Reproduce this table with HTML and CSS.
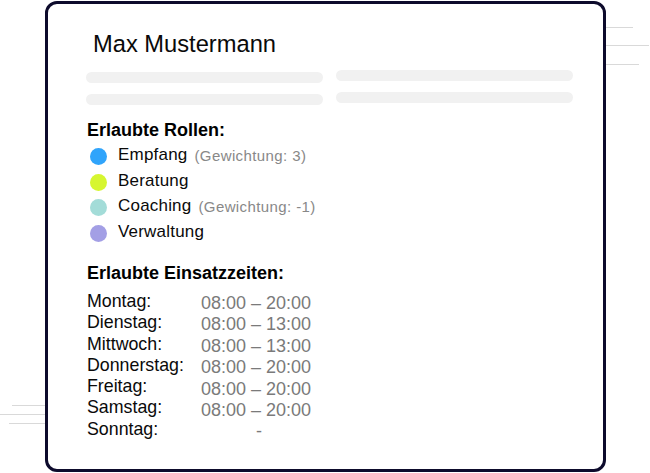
FILE: index.html
```html
<!DOCTYPE html>
<html lang="de">
<head>
<meta charset="utf-8">
<title>Max Mustermann</title>
<link rel="stylesheet" href="styles.css">
</head>
<body>
<div class="stage">
  <span class="deco deco-r1"></span>
  <span class="deco deco-r2"></span>
  <span class="deco deco-r3"></span>
  <span class="deco deco-l1"></span>
  <span class="deco deco-l2"></span>
  <span class="deco deco-l3"></span>

  <div class="card">
    <h1 class="name">Max Mustermann</h1>

    <div class="skeleton">
      <div class="sk-col">
        <span class="bar"></span>
        <span class="bar"></span>
      </div>
      <div class="sk-col sk-col-up">
        <span class="bar"></span>
        <span class="bar"></span>
      </div>
    </div>

    <h2 class="section-title section-roles">Erlaubte Rollen:</h2>
    <ul class="roles">
      <li class="role"><span class="dot dot-blue"></span><span class="role-name">Empfang</span><span class="weight">(Gewichtung: 3)</span></li>
      <li class="role"><span class="dot dot-lime"></span><span class="role-name">Beratung</span></li>
      <li class="role"><span class="dot dot-teal"></span><span class="role-name">Coaching</span><span class="weight">(Gewichtung: -1)</span></li>
      <li class="role"><span class="dot dot-purple"></span><span class="role-name">Verwaltung</span></li>
    </ul>

    <h2 class="section-title section-hours">Erlaubte Einsatzzeiten:</h2>
    <div class="hours">
      <div class="days">
        <div>Montag:</div>
        <div>Dienstag:</div>
        <div>Mittwoch:</div>
        <div>Donnerstag:</div>
        <div>Freitag:</div>
        <div>Samstag:</div>
        <div>Sonntag:</div>
      </div>
      <div class="times">
        <div>08:00 – 20:00</div>
        <div>08:00 – 13:00</div>
        <div>08:00 – 13:00</div>
        <div>08:00 – 20:00</div>
        <div>08:00 – 20:00</div>
        <div>08:00 – 20:00</div>
        <div class="none">-</div>
      </div>
    </div>
  </div>
</div>
</body>
</html>
```

FILE: styles.css
```css
* { box-sizing: border-box; }

html, body {
  margin: 0;
  padding: 0;
  background: #ffffff;
  width: 650px;
  height: 473px;
  overflow: hidden;
}

body {
  font-family: "Liberation Sans", Arial, Helvetica, sans-serif;
  color: #000000;
}

.stage {
  position: relative;
  width: 650px;
  height: 473px;
  padding-top: 1px;
  padding-left: 45px;
}

.deco {
  position: absolute;
  height: 1px;
  background: #d9d9d9;
  z-index: 0;
}
.deco-r1 { top: 27px; left: 590px; width: 43px; }
.deco-r2 { top: 45px; left: 590px; width: 59px; }
.deco-r3 { top: 64px; left: 590px; width: 49px; }
.deco-l1 { top: 405px; left: 12px; width: 40px; }
.deco-l2 { top: 414px; left: 0; width: 52px; }
.deco-l3 { top: 423px; left: 9px; width: 43px; }

.card {
  position: relative;
  z-index: 1;
  width: 561px;
  height: 471px;
  border: 3px solid #0d0b2c;
  border-radius: 12px;
  background: #ffffff;
  padding: 27px 30px 0 38px;
}

.name {
  margin: 0;
  padding-left: 7px;
  font-size: 23.7px;
  line-height: 27px;
  font-weight: normal;
  color: #0a0a0a;
}

.skeleton {
  display: grid;
  grid-template-columns: 237px 237px;
  column-gap: 13px;
  margin-top: 14px;
}

.sk-col {
  display: flex;
  flex-direction: column;
  gap: 11px;
}
.sk-col-up { margin-top: -2px; }

.bar {
  display: block;
  height: 11px;
  border-radius: 6px;
  background: #f1f1f1;
}

.section-title {
  margin: 0;
  padding-left: 1px;
  font-size: 18px;
  line-height: 22px;
  font-weight: bold;
}
.section-roles { margin-top: 14px; }
.section-hours { margin-top: 18px; }

.roles {
  list-style: none;
  margin: 1px 0 0 0;
  padding: 0;
}

.role {
  display: flex;
  align-items: center;
  height: 25.5px;
}

.dot {
  flex: none;
  width: 17px;
  height: 17px;
  border-radius: 50%;
  margin-left: 4px;
  margin-top: 4px;
  margin-right: 11px;
}
.dot-blue { background: #30a4fb; }
.dot-lime { background: #d6f630; }
.dot-teal { background: #a3dcd8; }
.dot-purple { background: #a39fe5; }

.role-name {
  font-size: 17px;
  line-height: 25.5px;
  letter-spacing: 0.2px;
  color: #0a0a0a;
}

.weight {
  margin-left: 7px;
  font-size: 15px;
  letter-spacing: 0.4px;
  color: #888888;
  line-height: 25.5px;
  padding-top: 1px;
}

.hours {
  display: flex;
  margin-top: 7px;
}

.days {
  width: 112px;
  padding-left: 1px;
  font-size: 17.8px;
  line-height: 21.3px;
  color: #0a0a0a;
}

.times {
  width: 116px;
  margin-top: 2px;
  font-size: 18px;
  line-height: 21.4px;
  text-align: center;
  color: #7a7a7a;
}

.times .none {
  padding-left: 6px;
}
```
